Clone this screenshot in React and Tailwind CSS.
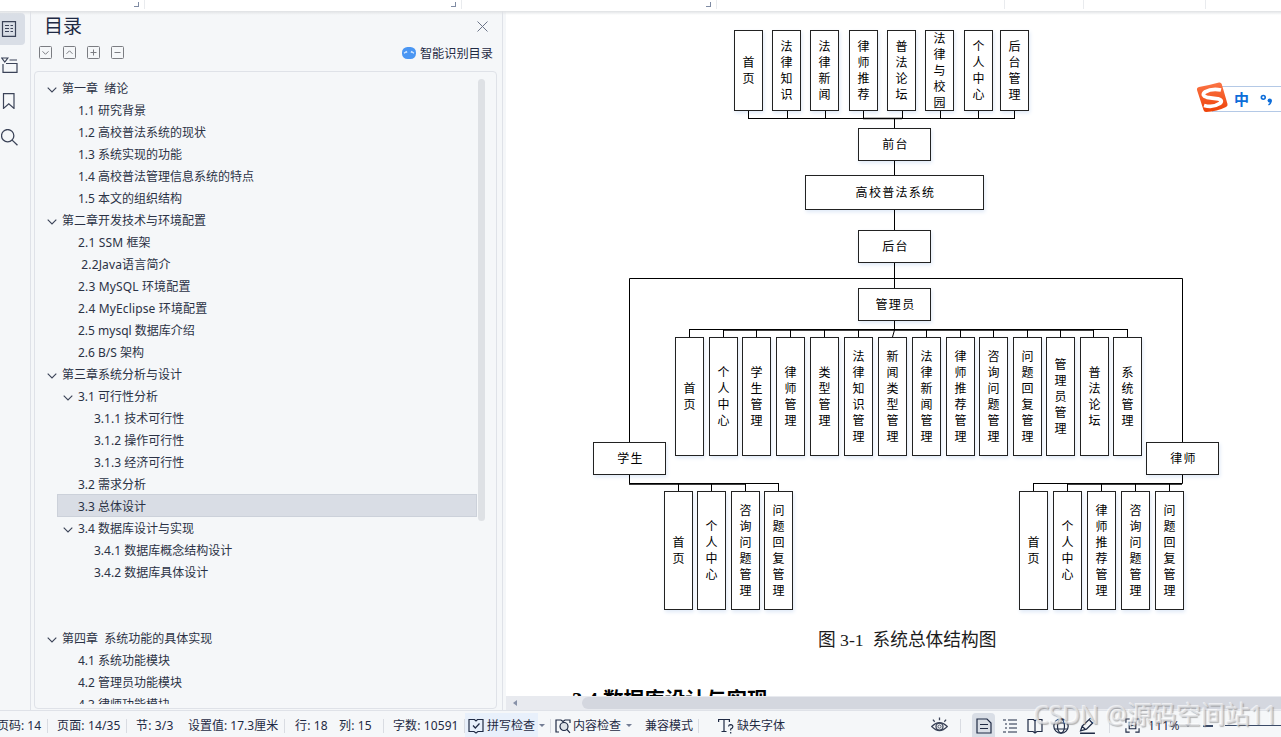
// =============================================
// Editor de documentos - índice, página y barra de estado
// =============================================

const UI_FONT = "font-['Noto_Sans','Noto_Sans_CJK_SC',sans-serif]"

// Índice del documento
const OUTLINE = [
  { level: 0, text: '第一章  绪论', open: true },
  { level: 1, text: '1.1 研究背景' },
  { level: 1, text: '1.2 高校普法系统的现状' },
  { level: 1, text: '1.3 系统实现的功能' },
  { level: 1, text: '1.4 高校普法管理信息系统的特点' },
  { level: 1, text: '1.5 本文的组织结构' },
  { level: 0, text: '第二章开发技术与环境配置', open: true },
  { level: 1, text: '2.1 SSM 框架', wide: true },
  { level: 1, text: ' 2.2Java语言简介', wide: true },
  { level: 1, text: '2.3 MySQL 环境配置', wide: true },
  { level: 1, text: '2.4 MyEclipse 环境配置', wide: true },
  { level: 1, text: '2.5 mysql 数据库介绍' },
  { level: 1, text: '2.6 B/S 架构' },
  { level: 0, text: '第三章系统分析与设计', open: true },
  { level: 1, text: '3.1 可行性分析', open: true },
  { level: 2, text: '3.1.1 技术可行性' },
  { level: 2, text: '3.1.2 操作可行性' },
  { level: 2, text: '3.1.3 经济可行性' },
  { level: 1, text: '3.2 需求分析' },
  { level: 1, text: '3.3 总体设计', active: true },
  { level: 1, text: '3.4 数据库设计与实现', open: true },
  { level: 2, text: '3.4.1 数据库概念结构设计' },
  { level: 2, text: '3.4.2 数据库具体设计' },
  { level: 0, text: '' },
  { level: 0, text: '' },
  { level: 0, text: '第四章  系统功能的具体实现', open: true },
  { level: 1, text: '4.1 系统功能模块' },
  { level: 1, text: '4.2 管理员功能模块' },
  { level: 1, text: '4.3 律师功能模块' },
]

const INDENT = ['pl-0', 'pl-4', 'pl-8']

// Nodos del diagrama, en coordenadas del lienzo
const row = (y, h, w, items) => items.map(([x, text]) => ({ x, y, w, h, text, vertical: true }))

const NODES = [
  ...row(18, 81, 29, [
    [228, '首页'], [266, '法律知识'], [304, '法律新闻'], [343, '律师推荐'],
    [381, '普法论坛'], [419, '法律与校园'], [458, '个人中心'], [494, '后台管理'],
  ]),
  { x: 352, y: 116, w: 73, h: 33, text: '前台' },
  { x: 299, y: 163, w: 179, h: 35, text: '高校普法系统' },
  { x: 352, y: 218, w: 73, h: 33, text: '后台' },
  { x: 352, y: 276, w: 73, h: 33, text: '管理员' },
  ...row(325, 119, 29, [
    [169, '首页'], [203, '个人中心'], [236, '学生管理'], [270, '律师管理'], [304, '类型管理'],
    [338, '法律知识管理'], [372, '新闻类型管理'], [406, '法律新闻管理'], [440, '律师推荐管理'],
    [473, '咨询问题管理'], [507, '问题回复管理'], [540, '管理员管理'], [574, '普法论坛'], [607, '系统管理'],
  ]),
  { x: 87, y: 430, w: 73, h: 33, text: '学生' },
  { x: 640, y: 430, w: 73, h: 33, text: '律师' },
  ...row(479, 119, 29, [
    [158, '首页'], [191, '个人中心'], [225, '咨询问题管理'], [258, '问题回复管理'],
    [513, '首页'], [547, '个人中心'], [581, '律师推荐管理'], [615, '咨询问题管理'], [649, '问题回复管理'],
  ]),
]

const drops = (xs, y1, y2) => xs.map((x) => `M${x}.5 ${y1}V${y2}`).join('')

const LINKS = [
  drops([242, 281, 319, 357, 396, 434, 472, 508], 99, 107),
  'M242 106.5H509M388.5 106V116M388.5 149V163M388.5 198V218M388.5 251V276',
  'M123.5 430V266.5H676.5V430',
  'M388.5 309V318L386.5 325M183 317.5H622',
  drops([183, 217, 250, 284, 318, 352, 420, 454, 487, 521, 554, 587, 621], 317, 325),
  'M123.5 463V471.5H272.5',
  drops([172, 205, 239, 272], 471, 479),
  'M676.5 463V471.5H527.5',
  drops([527, 561, 595, 629, 663], 471, 479),
].join('')

function Icon({ className = 'size-4', children, box = 16 }) {
  return (
    <svg viewBox={`0 0 ${box} ${box}`} className={`shrink-0 ${className}`} fill="none" stroke="currentColor" strokeWidth="1.2">
      {children}
    </svg>
  )
}

function Ribbon() {
  // Ancho de cada grupo y si lleva la esquina de opciones
  const groups = [
    ['w-[145px]', true], ['w-[317px]', true], ['w-[255px]', true],
    ['w-[288px]', false], ['w-[79px]', false], ['w-[122px]', false],
  ]
  return (
    <div className="flex h-[11px] shrink-0 bg-white">
      {groups.map(([width, corner]) => (
        <div key={width} className={`${width} flex h-[9px] shrink-0 justify-end border-r border-[#e9ebee] pt-0.5 pr-[5px]`}>
          {corner && <span className="size-[5px] border-r border-b border-[#7f8ba3]" />}
        </div>
      ))}
    </div>
  )
}

function Rail() {
  return (
    <div className="flex w-[31px] shrink-0 flex-col border-r border-[#dfe2e8] pt-0.5 text-[#3b4358]">
      <div className="flex h-8 w-[25px] items-center rounded-r-sm bg-[#d9dee6] pl-px">
        <Icon className="size-4">
          <path d="M1.5 .6h13v14.8h-13zM4 4.5h4M4 7.5h4M4 10.5h4M9.500 4.5h2.500M9.500 7.5h2.500M9.500 10.5h2.500" />
        </Icon>
      </div>
      <div className="flex h-[39px] items-center pl-px">
        <Icon className="h-4 w-[17px]">
          <path d="M.3 1h6L3.3 5zM8 3h7.5M1.500 7v8.3h14V6.5H4.5" />
        </Icon>
      </div>
      <div className="flex h-[33px] items-center pl-px">
        <Icon><path d="M2.5.6h10.5v14.8l-5.2-4.6-5.3 4.6z" /></Icon>
      </div>
      <div className="flex h-10 items-center pl-px">
        <Icon className="size-[17px]">
          <circle cx="6.3" cy="6.3" r="5.8" />
          <path d="M10.5 10.5l5 4.8" />
        </Icon>
      </div>
    </div>
  )
}

function OutlinePanel() {
  const tools = ['M3.5 5.3l3 3 3-3', 'M3.5 7.8l3-3 3 3', 'M3.5 6.5h6M6.5 3.5v6', 'M3.5 6.5h6']
  return (
    <div className="flex w-[472px] shrink-0 flex-col border-r border-[#dfe2e8] pr-1 pl-[3px]">
      {/* Título */}
      <div className="flex h-[33px] items-center justify-between pr-2.5 pb-0.5 pl-[10px]">
        <h2 className="text-[19px] leading-none text-[#1f2a44]">目录</h2>
        <Icon className="size-[11px] text-[#6b7488]" box={11}><path strokeWidth="1" d="M.5.5l10 10M10.5.5l-10 10" /></Icon>
      </div>

      {/* Herramientas */}
      <div className="flex h-[27px] items-start justify-between pr-[5px] pl-[5px]">
        <div className="flex gap-[11px] pt-0.5 text-[#7b7d82]">
          {tools.map((d) => (
            <Icon key={d} className="size-[13px]" box={13}>
              <rect x=".5" y=".5" width="12" height="12" rx="1" strokeWidth="1" />
              <path d={d} strokeWidth="1" />
            </Icon>
          ))}
        </div>
        <div className="flex items-center gap-1 text-[12.2px] leading-5 text-[#1f2a44]">
          <svg viewBox="0 0 14 12" className="-mt-0.5 h-3 w-3.5">
            <rect width="14" height="12" rx="5.5" fill="#4a96f3" />
            <path d="M2 6.2l2.3-1.5.7 1M12 6.2L9.700 4.700l-.7 1" fill="none" stroke="#d5e8ff" strokeWidth="1.3" />
          </svg>
          智能识别目录
        </div>
      </div>

      {/* Árbol */}
      <div className="mb-px flex h-[638px] w-[463px] rounded-sm border border-[#dfe2e8] pt-[5px]">
        <div className="h-[627px] w-[443px] overflow-hidden pl-[22px]">
          {OUTLINE.map((item, i) => (
            <div
              key={i}
              className={`flex items-center border pt-0.5 pl-1 text-xs whitespace-pre text-[#2b3245] ${
                item.active ? '-mt-px h-[23px] w-[420px] border-[#ccd1da] bg-[#d9dde5] pt-[3px]' : 'h-[22px] w-[421px] border-transparent'
              }`}
            >
              <div className={`${INDENT[item.level]} relative flex h-full items-center`}>
                {item.open && (
                  <svg viewBox="0 0 10 6" className={`absolute top-[7px] h-1.5 w-2.5 ${item.level ? 'left-px' : '-left-[15px]'}`}>
                    <path d="M.7.7L5 5l4.300-4.300" fill="none" stroke="#3b4358" strokeWidth="1.1" />
                  </svg>
                )}
                <span className={`leading-[18px] ${item.wide ? 'tracking-[0.15px]' : ''}`}>{item.text}</span>
              </div>
            </div>
          ))}
        </div>
        <div className="mt-0.5 h-[442px] w-[7px] rounded-full bg-[#dee1e5]" />
      </div>
    </div>
  )
}

function Diagram() {
  return (
    <div className="relative h-[612px] w-[775px] shrink-0">
      <svg viewBox="0 0 775 612" className="absolute inset-0 z-10 h-[612px] w-[775px]">
        <path d={LINKS} fill="none" stroke="#000" strokeWidth="1" />
        <path d="M217 318H588M123 472H239M676 472H561M357 106.500H396" fill="none" stroke="#000" strokeWidth="1.6" />
      </svg>
      {NODES.map((n) => (
        <div
          key={`${n.x}-${n.y}`}
          className="absolute flex items-center justify-center border border-[#222] bg-white text-xs text-black shadow-[1px_2px_4px_#dfe9f7]"
          style={{ left: n.x, top: n.y, width: n.w, height: n.h }}
        >
          {n.vertical ? (
            <span className="w-3 text-center leading-4 break-all">{n.text}</span>
          ) : (
            <span className="pl-0.5 tracking-[1.3px]">{n.text}</span>
          )}
        </div>
      ))}
    </div>
  )
}

function ImeBar() {
  return (
    <div className="absolute top-[71px] right-0 flex h-[30px] w-[85px]">
      <div className="mt-1 ml-4 flex h-[26px] w-[69px] items-center border-y border-[#b4c9e6] bg-white pl-[22px] text-[#0d6dd9]">
        <span className="text-[15px] leading-none font-bold">中</span>
        <svg viewBox="0 0 14 14" className="ml-2.5 size-[15px]">
          <circle cx="4" cy="5" r="1.8" fill="none" stroke="currentColor" strokeWidth="1.5" />
          <circle cx="10" cy="8" r="2" fill="currentColor" />
          <path d="M11.300 8q0 3-2.500 4" fill="none" stroke="currentColor" strokeWidth="1.300" />
        </svg>
      </div>
      <svg viewBox="0 0 32 31" className="absolute top-0 left-1 h-[31px] w-8 -translate-x-1">
        <defs>
          <linearGradient id="ime" x1="0" y1="0" x2="0" y2="1">
            <stop offset="0" stopColor="#fb7546" />
            <stop offset="1" stopColor="#ee4208" />
          </linearGradient>
        </defs>
        <path d="M3 5Q14 3 23 .5q2-.5 2.700 1.500L31.500 22q.5 2-1.500 3-9 4.500-20 5-2 0-2.500-2L1 8q-.4-2.500 2-3z" fill="url(#ime)" />
        <path d="M25 8Q16 6 9 10q-4 3.500 2 5.300 5 .9 11 1.500 6 2 1 5Q17 26 8 23.500" fill="none" stroke="#fff" strokeWidth="3.800" />
      </svg>
    </div>
  )
}

function DocumentView() {
  return (
    <div className="ml-[3px] flex w-[775px] flex-col bg-white">
      <div className="relative flex h-[685px] shrink-0 flex-col overflow-hidden pt-px">
        <Diagram />
        <p className="ml-[312px] h-[50px] shrink-0 pt-[3px] font-['Liberation_Serif','Noto_Sans_CJK_SC',serif] text-[17.700px] leading-[26px] whitespace-pre text-[#1c1c1c]">
          图 3-1  系统总体结构图
        </p>
        <h3 className="ml-[66px] shrink-0 pt-px font-['Liberation_Serif','Noto_Sans_CJK_SC',serif] text-[20.600px] leading-[50px] font-bold whitespace-pre text-black">
          3.4 数据库设计与实现
        </h3>
        <ImeBar />
      </div>
      {/* Scroll horizontal */}
      <div className="flex h-3.5 items-center bg-[#e8eaef] pl-[7px]">
        <span className="border-y-[3px] border-r-4 border-y-transparent border-r-[#8791a8]" />
        <div className="ml-[65px] h-3 flex-1 rounded-l-full bg-[#d4d7df]" />
      </div>
    </div>
  )
}

function Caret() {
  return <span className="border-x-[3px] border-t-[3px] border-x-transparent border-t-[#737d94]" />
}

function Separator({ className = '' }) {
  return <span className={`h-3.5 w-px shrink-0 bg-[#d9dce2] ${className}`} />
}

function StatusBar() {
  return (
    <div className="relative flex h-[27px] shrink-0 items-center overflow-hidden border-t border-[#dfe2e8] pt-[3px] text-xs whitespace-pre text-[#1f2a44]">
      <span className="-ml-[3px] w-[50px] shrink-0">页码: 14</span>
      <Separator />
      <span className="ml-[9px] w-[69px] shrink-0 tracking-[0.15px]">页面: 14/35</span>
      <Separator />
      <span className="ml-[9px] w-[52px] shrink-0 tracking-[0.15px]">节: 3/3</span>
      <span className="w-24 shrink-0">设置值: 17.3厘米</span>
      <Separator />
      <span className="ml-2.5 w-11 shrink-0 tracking-[0.15px]">行: 18</span>
      <span className="w-11 shrink-0 tracking-[0.15px]">列: 15</span>
      <Separator />
      <span className="ml-[9px] w-[71px] shrink-0 tracking-[0.1px]">字数: 10591</span>
      <Separator />
      <div className="flex h-[25px] w-[73px] shrink-0 items-center gap-[3px] bg-[#e8f0fb] pl-[3px]">
        <Icon>
          <path d="M6.500 1.500H1v12h5l2 1.500 2-1.500h5v-12H9.500L8 3zM5 7.500l2.300 2.500L11.500 5.500" />
        </Icon>
        <span className="shrink-0">拼写检查</span>
      </div>
      <div className="flex w-3 shrink-0 pl-px"><Caret /></div>
      <Separator />
      <div className="ml-1 flex w-[90px] shrink-0 items-center">
        <Icon>
          <path d="M4 14H1V2h5l2 1.500L10 2h5v3" />
          <circle cx="9" cy="8.500" r="4" fill="#dfe3e8" />
          <path d="M12 11.500l3 3.300" />
        </Icon>
        <span className="mr-[5px] ml-0.5">内容检查</span>
        <Caret />
      </div>
      <span className="w-[53px] shrink-0">兼容模式</span>
      <Separator />
      <div className="ml-[19px] flex w-[213px] shrink-0 items-center gap-[3px]">
        <Icon className="size-4">
          <path d="M.6 4V1.500h10.800V4M6 1.500v12M3.500 13.500h5" />
          <path d="M10.500 8.500q.3-1.800 2.200-1.800 2.300.2 2.100 2.100-.2 1.200-2.100 2.200v1.500M12.700 14v1.400" />
        </Icon>
        缺失字体
      </div>
      <Icon className="size-[17px] text-[#3b4358]">
        <path d="M.700 9Q8 1.500 15.300 9 8 16.500.7 9zM8 3V.5M3.500 4.500L1.800 2.500M12.500 4.500l1.700-2" />
        <circle cx="8" cy="9" r="3.300" />
        <circle cx="8" cy="9" r="1.500" strokeWidth=".8" />
      </Icon>
      <Separator className="ml-3" />
      {/* Modos de vista */}
      <div className="ml-[11px] flex h-[25px] w-[23px] shrink-0 items-center justify-center rounded-t-sm bg-[#d9dee6]">
        <Icon><path d="M1 1h10l4 4v10H1zM4 6.500h8M4 10.500h8" /></Icon>
      </div>
      <Icon className="ml-[7px] size-4"><path d="M1 2h3M6 2h9M3 6h2M7 6h8M3 10h2M7 10h8M1 14h3M6 14h9" /></Icon>
      <Icon className="ml-[9px] size-4"><path d="M1 1.500h5.500L8 3l1.500-1.500H15v12h-5L8 15l-2-1.500H1zM8 3v12" /></Icon>
      <Icon className="ml-2.5 size-4">
        <circle cx="8" cy="8" r="7.200" />
        <ellipse cx="8" cy="8" rx="3.500" ry="7.200" />
        <path d="M1.500 5h13M1.500 11h13" />
      </Icon>
      <Icon className="ml-2.5 size-[17px]"><path d="M1.500 13L3 8.500 11 1l3.500 3L7 11.500zM10 3l3 3M3 9l3.500 3M1 15.300h14" /></Icon>
      <Separator className="ml-[13px]" />
      <Icon className="ml-[15px] size-[15px]"><path d="M1 5V1h4M11 1h4v4M15 11v4h-4M5 15H1v-4M4.500 4.500h7v7h-7zM6 8h4" /></Icon>
      <span className="ml-2 w-[37px] shrink-0 tracking-[0.3px]">111%</span>
      <Caret />
      <span className="ml-3 h-0.5 w-2.5 shrink-0 bg-[#3b4b68]" />
      <span className="ml-3 h-px flex-1 bg-[#3b4b68]" />
    </div>
  )
}

export default function App() {
  return (
    <div className={`relative flex h-[737px] w-[1281px] flex-col overflow-hidden bg-[#f5f7f9] ${UI_FONT}`}>
      <Ribbon />
      <div className="flex h-[699px] shrink-0">
        <Rail />
        <OutlinePanel />
        <DocumentView />
      </div>
      <StatusBar />

      {/* Sombra bajo la cinta */}
      <div className="absolute inset-x-0 top-[11px] h-1 bg-linear-to-b from-[#dfe1e4] to-transparent" />

      {/* Marca de agua */}
      <div className="absolute right-[3px] bottom-[5px] text-[24.500px] leading-[34px] whitespace-pre text-[#dcdde0]/70 [text-shadow:-1px_-1px_0_#ffffff99,1px_1px_1px_#77777788]">
        CSDN @源码空间站11
      </div>
    </div>
  )
}
